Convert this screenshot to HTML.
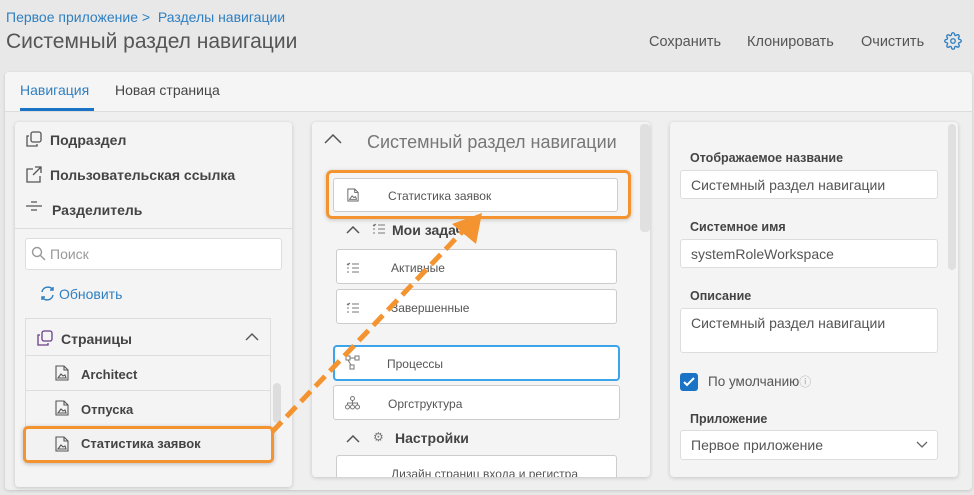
<!DOCTYPE html>
<html><head><meta charset="utf-8"><style>
*{box-sizing:border-box;margin:0;padding:0}
body{width:974px;height:495px;background:#e8e8e8;font-family:"Liberation Sans","DejaVu Sans",sans-serif;position:relative;overflow:hidden;color:#444}
.a{position:absolute}
.crumb{left:6px;top:9px;font-size:14px;color:#2f7fc1}
.title{left:6px;top:30px;font-size:21px;color:#555}
.act{top:34px;font-size:14.5px;color:#555}
.card{left:5px;top:72px;width:967px;height:418px;background:#efefef;border-radius:4px;box-shadow:0 1px 3px rgba(0,0,0,.15)}
.tabs{left:5px;top:72px;width:967px;height:40px;background:#f5f5f5;border-bottom:1px solid #ddd;border-radius:4px 4px 0 0}
.panel{background:#f4f4f4;border-radius:4px;box-shadow:0 1px 4px rgba(0,0,0,.18)}
.b{font-weight:bold;font-size:14px;color:#444}
.inp{background:#fff;border:1px solid #ddd;border-radius:3px;font-size:14px;color:#555;padding:6px 10px}
.mc{background:#fff;border:1px solid #ccc;border-radius:3px;font-size:12px;color:#555}
.lbl{font-weight:bold;font-size:12.5px;color:#444}
.row{left:25px;width:246px;border-top:1px solid #ddd;font-weight:bold;font-size:13px;color:#444}
</style></head><body>
<div class="a crumb">Первое приложение &gt;&nbsp; Разделы навигации</div>
<div class="a title">Системный раздел навигации</div>
<div class="a act" style="left:649px">Сохранить</div>
<div class="a act" style="left:747px">Клонировать</div>
<div class="a act" style="left:861px">Очистить</div>
<svg class="a" style="left:944px;top:32px" width="18" height="18" viewBox="0 0 24 24" fill="none" stroke="#2f7fc1" stroke-width="1.8"><circle cx="12" cy="12" r="3"/><path d="M19.4 15a1.65 1.65 0 0 0 .33 1.82l.06.06a2 2 0 1 1-2.83 2.83l-.06-.06a1.65 1.65 0 0 0-1.82-.33 1.65 1.65 0 0 0-1 1.51V21a2 2 0 1 1-4 0v-.09A1.65 1.65 0 0 0 9 19.4a1.65 1.65 0 0 0-1.82.33l-.06.06a2 2 0 1 1-2.83-2.83l.06-.06A1.65 1.65 0 0 0 4.68 15a1.65 1.65 0 0 0-1.51-1H3a2 2 0 1 1 0-4h.09A1.65 1.65 0 0 0 4.6 9a1.65 1.65 0 0 0-.33-1.82l-.06-.06a2 2 0 1 1 2.83-2.83l.06.06A1.65 1.65 0 0 0 9 4.68 1.65 1.65 0 0 0 10 3.17V3a2 2 0 1 1 4 0v.09a1.65 1.65 0 0 0 1 1.51 1.65 1.65 0 0 0 1.82-.33l.06-.06a2 2 0 1 1 2.83 2.83l-.06.06A1.65 1.65 0 0 0 19.4 9a1.65 1.65 0 0 0 1.51 1H21a2 2 0 1 1 0 4h-.09a1.65 1.65 0 0 0-1.51 1z"/></svg>

<div class="a card"></div>
<div class="a tabs"></div>
<div class="a" style="left:20px;top:82px;font-size:14px;color:#2f7fc1">Навигация</div>
<div class="a" style="left:20px;top:108px;width:74px;height:3px;background:#1a73c4"></div>
<div class="a" style="left:115px;top:82px;font-size:14px;color:#444">Новая страница</div>

<!-- left panel -->
<div class="a panel" style="left:15px;top:122px;width:277px;height:365px"></div>
<svg class="a" style="left:25px;top:131px" width="17" height="17" viewBox="0 0 17 17" fill="none" stroke="#555" stroke-width="1.3"><rect x="6" y="1" width="10" height="10" rx="2"/><path d="M4 5H2v10h10v-2"/></svg>
<div class="a b" style="left:50px;top:132px">Подраздел</div>
<svg class="a" style="left:25px;top:166px" width="17" height="17" viewBox="0 0 17 17" fill="none" stroke="#555" stroke-width="1.3"><path d="M8 3H2v13h13v-6M10 1h6v6M16 1L8 9"/></svg>
<div class="a b" style="left:50px;top:167px">Пользовательская ссылка</div>
<svg class="a" style="left:25px;top:201px" width="18" height="12" viewBox="0 0 18 12" stroke="#555" stroke-width="1.2"><path d="M6 1h6M1 5h16M6 9h6"/></svg>
<div class="a b" style="left:52px;top:202px">Разделитель</div>
<div class="a" style="left:15px;top:228px;width:277px;border-top:1px solid #ddd"></div>
<div class="a inp" style="left:25px;top:238px;width:257px;height:32px;color:#999;padding-left:24px;padding-top:7px">Поиск</div>
<svg class="a" style="left:31px;top:246px" width="15" height="15" viewBox="0 0 15 15" fill="none" stroke="#999" stroke-width="1.4"><circle cx="6" cy="6" r="4.5"/><path d="M9.5 9.5L14 14"/></svg>
<svg class="a" style="left:39px;top:285px" width="17" height="17" viewBox="0 0 17 17" fill="none" stroke="#2f7fc1" stroke-width="1.4"><path d="M3 7a6 6 0 0 1 11-2M14 2v3h-3M14 10a6 6 0 0 1-11 2M3 15v-3h3"/></svg>
<div class="a" style="left:59px;top:286px;font-size:14px;color:#2f7fc1">Обновить</div>
<div class="a" style="left:25px;top:318px;width:246px;height:145px;border-right:1px solid #ddd;border-left:1px solid #ddd"></div>
<div class="a row" style="top:318px;height:37px;font-size:14px;padding:12px 0 0 36px">Страницы</div>
<svg class="a" style="left:36px;top:330px" width="17" height="17" viewBox="0 0 17 17" fill="none" stroke="#6a3d8a" stroke-width="1.3"><rect x="6" y="1" width="10" height="10" rx="2"/><path d="M4 5H2v10h10v-2"/></svg>
<svg class="a" style="left:245px;top:333px" width="14" height="8" viewBox="0 0 14 8" fill="none" stroke="#555" stroke-width="1.4"><path d="M1 7l6-6 6 6"/></svg>
<div class="a row" style="top:355px;height:35px;padding:11px 0 0 56px">Architect</div>
<div class="a row" style="top:390px;height:35px;padding:11px 0 0 56px">Отпуска</div>
<div class="a" style="left:273px;top:383px;width:8px;height:40px;background:#ddd;border-radius:4px"></div>
<div class="a" style="left:23px;top:426px;width:251px;height:37px;border:3px solid #f39431;border-radius:5px;background:#f2f2f2;box-shadow:0 1px 4px rgba(0,0,0,.25)"></div>
<div class="a b" style="left:81px;top:436px;font-size:13px">Статистика заявок</div>
<svg class="a" style="left:55px;top:365px" width="14" height="16" viewBox="0 0 14 16" fill="none" stroke="#555" stroke-width="1.1"><path d="M1 1h8l4 4v10H1zM9 1v4h4M3 13l3-4 2 2 2-1 1 3z"/></svg>
<svg class="a" style="left:55px;top:400px" width="14" height="16" viewBox="0 0 14 16" fill="none" stroke="#555" stroke-width="1.1"><path d="M1 1h8l4 4v10H1zM9 1v4h4M3 13l3-4 2 2 2-1 1 3z"/></svg>
<svg class="a" style="left:55px;top:436px" width="14" height="16" viewBox="0 0 14 16" fill="none" stroke="#555" stroke-width="1.1"><path d="M1 1h8l4 4v10H1zM9 1v4h4M3 13l3-4 2 2 2-1 1 3z"/></svg>

<!-- middle panel -->
<div class="a panel" style="left:312px;top:122px;width:338px;height:355px;overflow:hidden">
 <svg class="a" style="left:12px;top:12px" width="18" height="10" viewBox="0 0 18 10" fill="none" stroke="#555" stroke-width="1.5"><path d="M1 9l8-8 8 8"/></svg>
 <div class="a" style="left:55px;top:10px;font-size:18px;color:#777">Системный раздел навигации</div>
 <div class="a" style="left:328px;top:2px;width:10px;height:108px;background:#e0e0e0;border-radius:4px"></div>
 <div class="a mc" style="left:21px;top:56px;width:285px;height:34px;padding:10px 0 0 54px">Статистика заявок</div>
 <svg class="a" style="left:35px;top:66px" width="12" height="14" viewBox="0 0 14 16" fill="none" stroke="#666" stroke-width="1.1"><path d="M1 1h8l4 4v10H1zM9 1v4h4M3 13l3-4 2 2 2-1 1 3z"/></svg>
 <svg class="a" style="left:34px;top:104px" width="14" height="8" viewBox="0 0 14 8" fill="none" stroke="#555" stroke-width="1.5"><path d="M1 7l6-6 6 6"/></svg>
 <svg class="a" style="left:60px;top:100px" width="14" height="14" viewBox="0 0 14 14" stroke="#777" stroke-width="1"><path d="M1 3l1 1 2-2M6 3h7M1 7h2M6 7h7M1 11h2M6 11h7"/></svg>
 <div class="a b" style="left:80px;top:100px">Мои задачи</div>
 <div class="a mc" style="left:24px;top:127px;width:281px;height:35px;padding:11px 0 0 54px">Активные</div>
 <div class="a mc" style="left:24px;top:167px;width:281px;height:35px;padding:11px 0 0 54px">Завершенные</div>
 <svg class="a" style="left:34px;top:139px" width="14" height="14" viewBox="0 0 14 14" stroke="#777" stroke-width="1"><path d="M1 3l1 1 2-2M6 3h7M1 7h2M6 7h7M1 11h2M6 11h7"/></svg>
 <svg class="a" style="left:34px;top:179px" width="14" height="14" viewBox="0 0 14 14" stroke="#777" stroke-width="1"><path d="M1 3l1 1 2-2M6 3h7M1 7h2M6 7h7M1 11h2M6 11h7"/></svg>
 <div class="a mc" style="left:21px;top:223px;width:287px;height:36px;border:2px solid #3ba4ea;border-radius:4px;padding:10px 0 0 52px">Процессы</div>
 <svg class="a" style="left:33px;top:233px" width="15" height="15" viewBox="0 0 15 15" fill="none" stroke="#777" stroke-width="1"><rect x="1" y="1" width="4" height="4"/><rect x="10" y="1" width="4" height="4"/><rect x="5" y="10" width="4" height="4"/><path d="M5 3h5M3 5l3 5"/></svg>
 <div class="a mc" style="left:21px;top:263px;width:287px;height:35px;padding:11px 0 0 54px">Оргструктура</div>
 <svg class="a" style="left:33px;top:274px" width="15" height="14" viewBox="0 0 15 14" fill="none" stroke="#777" stroke-width="1"><circle cx="7.5" cy="2.5" r="2"/><circle cx="2.5" cy="11" r="2"/><circle cx="7.5" cy="11" r="2"/><circle cx="12.5" cy="11" r="2"/><path d="M7.5 4.5V9M2.5 9V7h10v2"/></svg>
 <svg class="a" style="left:34px;top:313px" width="14" height="8" viewBox="0 0 14 8" fill="none" stroke="#555" stroke-width="1.5"><path d="M1 7l6-6 6 6"/></svg>
 <div class="a" style="left:61px;top:308px;font-size:12px;color:#777">⚙</div>
 <div class="a b" style="left:83px;top:308px">Настройки</div>
 <div class="a mc" style="left:24px;top:333px;width:281px;height:35px;padding:11px 0 0 54px">Дизайн страниц входа и регистра</div>
</div>
<div class="a" style="left:326px;top:170px;width:305px;height:49px;border:3px solid #f39431;border-radius:6px;box-shadow:0 1px 4px rgba(0,0,0,.2)"></div>

<!-- arrow -->
<svg class="a" style="left:0;top:0" width="974" height="495"><path d="M272 432L462 232" stroke="#f39431" stroke-width="5" stroke-dasharray="14 7" fill="none"/><path d="M482 213L476 244L452 224z" fill="#f39431"/></svg>

<!-- right panel -->
<div class="a panel" style="left:670px;top:122px;width:288px;height:355px"></div>
<div class="a" style="left:948px;top:124px;width:8px;height:146px;background:#e0e0e0;border-radius:4px"></div>
<div class="a lbl" style="left:690px;top:151px">Отображаемое название</div>
<div class="a inp" style="left:680px;top:170px;width:258px;height:29px">Системный раздел навигации</div>
<div class="a lbl" style="left:690px;top:220px">Системное имя</div>
<div class="a inp" style="left:680px;top:239px;width:258px;height:29px">systemRoleWorkspace</div>
<div class="a lbl" style="left:690px;top:289px">Описание</div>
<div class="a inp" style="left:680px;top:308px;width:258px;height:45px">Системный раздел навигации</div>
<div class="a" style="left:680px;top:373px;width:18px;height:18px;background:#1a73c4;border-radius:3px"></div>
<svg class="a" style="left:683px;top:377px" width="12" height="10" viewBox="0 0 12 10" fill="none" stroke="#fff" stroke-width="2"><path d="M1 5l3 3 7-7"/></svg>
<div class="a" style="left:708px;top:373px;font-size:13.5px;color:#555">По умолчанию<span style="color:#aaa;font-size:12px">ⓘ</span></div>
<div class="a lbl" style="left:690px;top:412px">Приложение</div>
<div class="a inp" style="left:680px;top:430px;width:258px;height:30px">Первое приложение</div>
<svg class="a" style="left:916px;top:441px" width="12" height="7" viewBox="0 0 12 7" fill="none" stroke="#666" stroke-width="1.3"><path d="M1 1l5 5 5-5"/></svg>
</body></html>
